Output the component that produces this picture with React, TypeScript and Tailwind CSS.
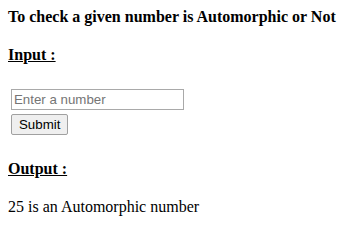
export default function App() {
  return (
    <div className="min-h-screen bg-white p-2 font-['Liberation_Serif',serif] text-base text-black">
      <h4 className="font-bold leading-[18px]">To check a given number is Automorphic or Not</h4>

      <h4 className="mt-[20px] font-bold leading-[18px] underline">Input :</h4>

      <form className="mt-[25px] ml-[3px] flex flex-col items-start gap-[4px]">
        <input
          type="text"
          placeholder="Enter a number"
          className="h-[21px] w-[173px] border border-[#a9a9a9] px-[2px] font-['Liberation_Sans',sans-serif] text-[13.3px] text-black placeholder:text-[#757575] outline-none"
        />
        <button
          type="button"
          className="h-[21px] rounded-[2px] border border-[#a0a0a0] bg-[#efefef] px-[7px] font-['Liberation_Sans',sans-serif] text-[13.3px] leading-none text-black"
        >
          Submit
        </button>
      </form>

      <h4 className="mt-[25px] font-bold leading-[18px] underline">Output :</h4>

      <p className="mt-[20px] leading-[18px]">25 is an Automorphic number</p>
    </div>
  )
}
